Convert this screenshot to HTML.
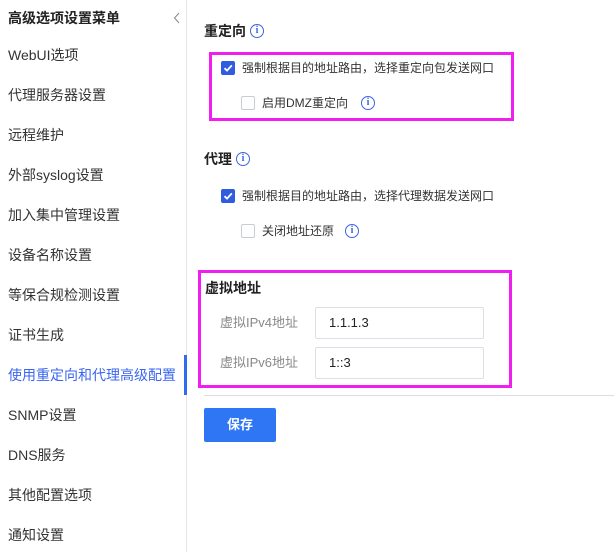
<!DOCTYPE html>
<html><head><meta charset="utf-8"><style>
*{margin:0;padding:0;box-sizing:border-box}
body{width:614px;height:552px;overflow:hidden;background:#fff;font-family:"Liberation Sans","Noto Sans CJK SC",sans-serif;color:#333;position:relative;font-size:14px}
.a{position:absolute;white-space:nowrap;line-height:20px}
.side{position:absolute;left:0;top:0;width:187px;height:552px;border-right:1px solid #e4e6eb}
.it{position:absolute;left:8px;font-size:14px;color:#333;line-height:20px}
.cb{position:absolute;width:14px;height:14px;border:1px solid #c9ccd3;border-radius:2px;background:#fff}
.cb.on{background:#2f5ce0;border-color:#2f5ce0}
.info{position:absolute;width:14px;height:14px;border:1.3px solid #3a66e0;border-radius:50%;color:#3a66e0;font-size:10px;line-height:11px;text-align:center;font-weight:bold;font-family:"Liberation Serif",serif}
.mag{position:absolute;border:3px solid #f01ff0}
.inp{position:absolute;left:315px;width:169px;height:32px;border:1px solid #dcdfe6;border-radius:2px;font-size:13px;color:#222;padding-left:13px;line-height:30px}
.lab{position:absolute;left:220px;font-size:13px;color:#888;line-height:20px}
.t{font-size:12px}
</style></head><body>
<div class="side">
<div class="it" style="top:8px;font-weight:bold;color:#222">高级选项设置菜单</div>
<svg style="position:absolute;left:173px;top:12px" width="8" height="12" viewBox="0 0 8 12"><path d="M6 1L1.5 6 6 11" stroke="#888" stroke-width="1" fill="none"/></svg>
<div class="it" style="top:45px">WebUI选项</div>
<div class="it" style="top:85px">代理服务器设置</div>
<div class="it" style="top:125px">远程维护</div>
<div class="it" style="top:165px">外部syslog设置</div>
<div class="it" style="top:205px">加入集中管理设置</div>
<div class="it" style="top:245px">设备名称设置</div>
<div class="it" style="top:285px">等保合规检测设置</div>
<div class="it" style="top:325px">证书生成</div>
<div class="it" style="top:365px;color:#3a66f0">使用重定向和代理高级配置</div>
<div style="position:absolute;left:184px;top:355px;width:3px;height:40px;background:#2f6cf0"></div>
<div class="it" style="top:405px">SNMP设置</div>
<div class="it" style="top:445px">DNS服务</div>
<div class="it" style="top:485px">其他配置选项</div>
<div class="it" style="top:525px">通知设置</div>
</div>

<div class="a" style="left:204px;top:21px;font-weight:bold;color:#222">重定向</div>
<div class="info" style="left:250px;top:24px">i</div>
<div class="mag" style="left:209px;top:52px;width:305px;height:69px"></div>
<div class="cb on" style="left:221px;top:61px"><svg width="12" height="12" viewBox="0 0 12 12" style="position:absolute;left:0;top:0"><path d="M2.5 6.2L5 8.6 9.8 3.4" stroke="#fff" stroke-width="1.8" fill="none"/></svg></div>
<div class="a t" style="left:242px;top:58px">强制根据目的地址路由，选择重定向包发送网口</div>
<div class="cb" style="left:241px;top:96px"></div>
<div class="a t" style="left:262px;top:93px">启用DMZ重定向</div>
<div class="info" style="left:361px;top:96px">i</div>

<div class="a" style="left:204px;top:149px;font-weight:bold;color:#222">代理</div>
<div class="info" style="left:236px;top:152px">i</div>
<div class="cb on" style="left:221px;top:189px"><svg width="12" height="12" viewBox="0 0 12 12" style="position:absolute;left:0;top:0"><path d="M2.5 6.2L5 8.6 9.8 3.4" stroke="#fff" stroke-width="1.8" fill="none"/></svg></div>
<div class="a t" style="left:242px;top:186px">强制根据目的地址路由，选择代理数据发送网口</div>
<div class="cb" style="left:241px;top:224px"></div>
<div class="a t" style="left:262px;top:221px">关闭地址还原</div>
<div class="info" style="left:345px;top:224px">i</div>

<div class="mag" style="left:198px;top:270px;width:314px;height:118px"></div>
<div class="a" style="left:205px;top:278px;font-weight:bold;color:#222">虚拟地址</div>
<div class="lab" style="top:313px">虚拟IPv4地址</div>
<div class="inp" style="top:307px">1.1.1.3</div>
<div class="lab" style="top:353px">虚拟IPv6地址</div>
<div class="inp" style="top:347px">1::3</div>
<div style="position:absolute;left:204px;top:395px;width:410px;height:1px;background:#dcdde2"></div>
<div style="position:absolute;left:204px;top:408px;width:72px;height:34px;background:#2f76f5;border-radius:2px;color:#fff;font-size:13px;text-align:center;line-height:34px;font-weight:bold">保存</div>
</body></html>
